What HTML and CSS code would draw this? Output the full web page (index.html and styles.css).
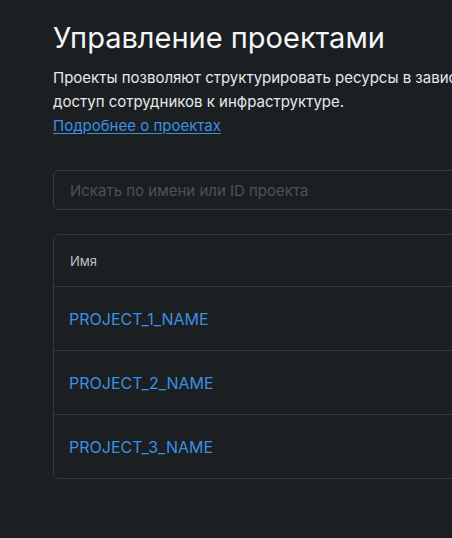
FILE: index.html
```html
<!DOCTYPE html>
<html lang="ru">
<head>
<meta charset="utf-8">
<title>Управление проектами</title>
<link rel="stylesheet" href="styles.css">
</head>
<body>
<main class="page">
  <h1 class="title">Управление проектами</h1>
  <div class="intro">
    <p class="lead">Проекты позволяют структурировать ресурсы в зависимости от задач и разграничивать<br>доступ сотрудников к инфраструктуре.</p>
    <a class="more" href="#">Подробнее о проектах</a>
  </div>
  <div class="search">
    <input class="search-input" type="text" placeholder="Искать по имени или ID проекта">
  </div>
  <div class="table">
    <div class="thead">Имя</div>
    <div class="row"><a class="name" href="#">PROJECT_1_NAME</a></div>
    <div class="row"><a class="name" href="#">PROJECT_2_NAME</a></div>
    <div class="row"><a class="name" href="#">PROJECT_3_NAME</a></div>
  </div>
</main>
</body>
</html>
```

FILE: styles.css
```css
html, body {
  margin: 0;
  padding: 0;
  background: #1b1f22;
  overflow: hidden;
}
body {
  font-family: Inter, "Noto Sans", sans-serif;
  color: #e8ecef;
}
.page {
  width: 900px;
  padding: 20px 0 0 53px;
  display: flex;
  flex-direction: column;
}
.title {
  margin: 0;
  font-size: 29px;
  line-height: 36px;
  font-weight: 400;
  color: #f4f6f8;
}
.intro {
  margin-top: 10px;
  font-size: 15px;
  line-height: 24px;
  display: flex;
  flex-direction: column;
  align-items: flex-start;
}
.lead {
  margin: 0;
  color: #e6e9ec;
}
.more {
  color: #3d8fe0;
  text-decoration: underline;
  text-underline-offset: 2px;
}
.search {
  margin-top: 32px;
}
.search-input {
  box-sizing: border-box;
  width: 100%;
  height: 40px;
  border: 1px solid #383d42;
  border-radius: 6px;
  background: #1b1f22;
  padding: 0 16px;
  font-family: Inter, "Noto Sans", sans-serif;
  font-size: 15px;
  color: #e8ecef;
  outline: none;
}
.search-input::placeholder {
  color: #4b5359;
}
.table {
  margin-top: 24px;
  border: 1px solid #33383c;
  border-radius: 6px;
  display: flex;
  flex-direction: column;
}
.thead {
  height: 51px;
  display: flex;
  align-items: center;
  padding: 0 16px;
  font-size: 13px;
  color: #b9c1c8;
}
.row {
  height: 63px;
  border-top: 1px solid #33383c;
  display: flex;
  align-items: center;
  padding: 0 15px;
}
.name {
  font-size: 16px;
  color: #3d8fe0;
  text-decoration: none;
}
```
